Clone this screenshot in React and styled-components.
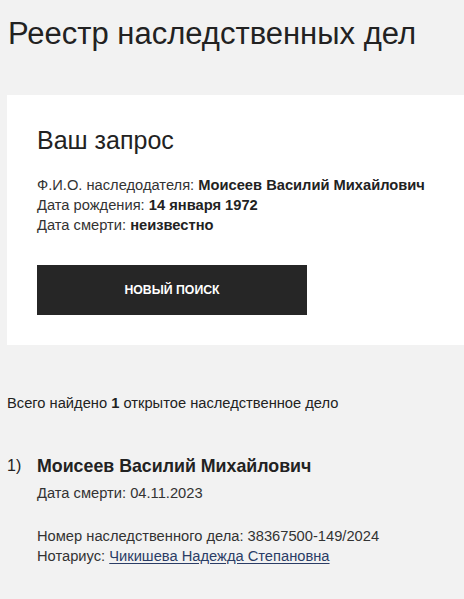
import React from "react";
import styled, { createGlobalStyle } from "styled-components";

const COLORS = {
  page: "#f2f2f2",
  card: "#ffffff",
  text: "#222222",
  label: "#333333",
  button: "#262626",
  link: "#2b3d66",
};

const GlobalStyle = createGlobalStyle`
  html, body {
    margin: 0;
    padding: 0;
    background: ${COLORS.page};
  }
  body {
    font-family: "Liberation Sans", Arial, sans-serif;
    color: ${COLORS.text};
  }
`;

const Page = styled.main`
  padding: 14px 0 30px 7px;
`;

const Title = styled.h1`
  margin: 0 0 41px 1px;
  font-size: 31px;
  font-weight: 400;
  line-height: 40px;
`;

/* Request card */

const Card = styled.section`
  background: ${COLORS.card};
  padding: 30px;
`;

const CardTitle = styled.h2`
  margin: 0 0 20px;
  font-size: 25px;
  font-weight: 400;
  line-height: 30px;
`;

const InfoList = styled.div`
  display: flex;
  flex-direction: column;
`;

const InfoLine = styled.p`
  margin: 0;
  font-size: 14.7px;
  line-height: 20px;
  color: ${COLORS.label};

  b {
    color: ${COLORS.text};
    font-weight: 700;
  }
`;

const Button = styled.button`
  margin-top: 30px;
  width: 270px;
  height: 50px;
  border: 0;
  background: ${COLORS.button};
  color: #fff;
  font-family: inherit;
  font-size: 12.3px;
  font-weight: 700;
  text-transform: uppercase;
  cursor: pointer;
`;

/* Results */

const Summary = styled.p`
  margin: 48px 0 0;
  font-size: 14.7px;
  line-height: 20px;
`;

const ResultList = styled.ol`
  list-style: none;
  margin: 40px 0 0;
  padding: 0;
`;

const ResultItem = styled.li`
  display: grid;
  grid-template-columns: 30px 1fr;
`;

const ItemNumber = styled.span`
  font-size: 16px;
  line-height: 26px;
`;

const ItemBody = styled.div`
  display: flex;
  flex-direction: column;
`;

const ItemName = styled.h3`
  margin: 0 0 4px;
  font-size: 17.8px;
  font-weight: 700;
  line-height: 26px;
`;

const ItemLine = styled.p`
  margin: 0;
  font-size: 14.7px;
  line-height: 20px;
  color: ${COLORS.label};
  margin-top: ${(props) => (props.$gap ? "23px" : "0")};
`;

const Link = styled.a`
  color: ${COLORS.link};
  text-decoration: underline;
  text-underline-offset: 2px;
`;

const cases = [
  {
    name: "Моисеев Василий Михайлович",
    death: "04.11.2023",
    number: "38367500-149/2024",
    notary: "Чикишева Надежда Степановна",
  },
];

const App = () => {
  return (
    <>
      <GlobalStyle />
      <Page>
        <Title>Реестр наследственных дел</Title>

        <Card>
          <CardTitle>Ваш запрос</CardTitle>
          <InfoList>
            <InfoLine>
              Ф.И.О. наследодателя: <b>Моисеев Василий Михайлович</b>
            </InfoLine>
            <InfoLine>
              Дата рождения: <b>14 января 1972</b>
            </InfoLine>
            <InfoLine>
              Дата смерти: <b>неизвестно</b>
            </InfoLine>
          </InfoList>
          <Button>Новый поиск</Button>
        </Card>

        <Summary>
          Всего найдено <b>1</b> открытое наследственное дело
        </Summary>

        <ResultList>
          {cases.map((item, i) => (
            <ResultItem key={item.number}>
              <ItemNumber>{i + 1})</ItemNumber>
              <ItemBody>
                <ItemName>{item.name}</ItemName>
                <ItemLine>Дата смерти: {item.death}</ItemLine>
                <ItemLine $gap>Номер наследственного дела: {item.number}</ItemLine>
                <ItemLine>
                  Нотариус: <Link href="#">{item.notary}</Link>
                </ItemLine>
              </ItemBody>
            </ResultItem>
          ))}
        </ResultList>
      </Page>
    </>
  );
};

export default App;
